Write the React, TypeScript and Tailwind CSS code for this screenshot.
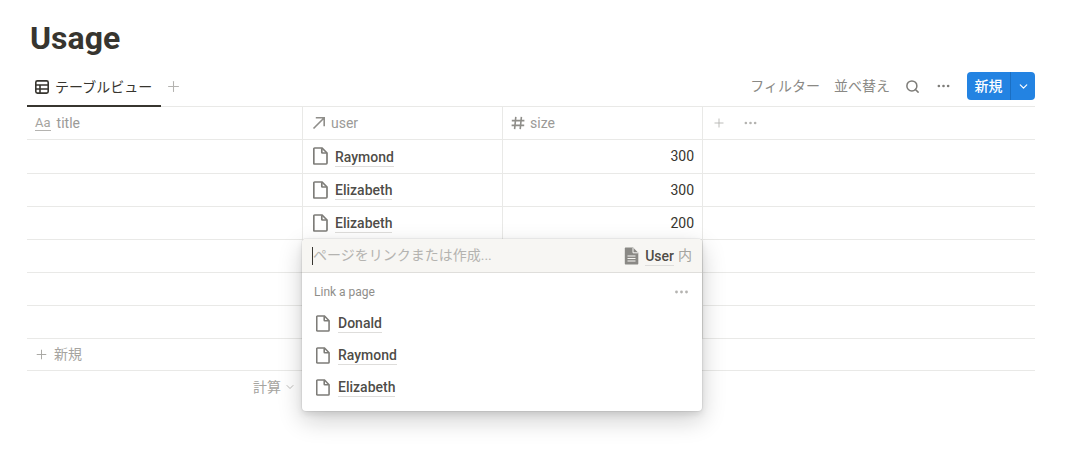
import { ChevronDown, Plus, Search } from 'lucide-react';

const FONT = 'font-["Roboto","Noto_Sans_CJK_JP",sans-serif]';

const rows = [
  { user: 'Raymond', size: '300', h: 'h-[34px]' },
  { user: 'Elizabeth', size: '300', h: 'h-[33px]' },
  { user: 'Elizabeth', size: '200', h: 'h-[33px]' },
  { user: '', size: '', h: 'h-[33px]' },
  { user: '', size: '', h: 'h-[33px]' },
  { user: '', size: '', h: 'h-[33px]' },
];

function PageIcon({ className = '' }: { className?: string }) {
  return (
    <svg viewBox="0 0 15 18" className={className} fill="none" stroke="#7d7c78" strokeWidth="1.7">
      <path d="M1.7 1h7.4l4.9 5v10.1c0 .5-.4.9-.9.9H1.7c-.5 0-.9-.4-.9-.9V1.9c0-.5.4-.9.9-.9z" />
      <path d="M8.8 1.2v4.2c0 .4.2.6.6.6h4.4" />
    </svg>
  );
}

function Dots({ className = '' }: { className?: string }) {
  return (
    <svg viewBox="0 0 14 4" className={className} fill="currentColor">
      <circle cx="2" cy="2" r="1.4" />
      <circle cx="7" cy="2" r="1.4" />
      <circle cx="12" cy="2" r="1.4" />
    </svg>
  );
}

function LinkName({ children }: { children: string }) {
  return (
    <span className="mt-[2px] text-[14px] leading-[17px] font-medium text-[#37352f]/90 border-b border-[#dedddb]">
      {children}
    </span>
  );
}

export default function App() {
  return (
    <div className={`w-[1071px] h-[464px] bg-white overflow-hidden relative pl-[27px] ${FONT}`}>
      <div className="w-[1008px]">
        <h1 className="h-[73px] pt-[17px] pl-[3px] text-[32px] leading-[42px] font-bold text-[#37352f]">Usage</h1>

        {/* tabs + actions */}
        <div className="h-[34px] flex items-start justify-between border-b border-[#e9e9e7]">
          <div className="flex items-start">
            <div className="h-[34px] w-[134px] flex items-center gap-[6px] pl-[8px] pb-[4px] border-b-2 border-[#37352f] text-[14px] text-[#37352f]">
              <svg viewBox="0 0 14 14" className="w-[14px] h-[14px]" fill="none" stroke="#37352f" strokeWidth="1.6">
                <rect x="0.8" y="0.9" width="12.4" height="12.2" rx="1.6" />
                <path d="M0.7 5h12.6M0.7 9h12.6M5 5v8" />
              </svg>
              <span className="whitespace-nowrap">テーブルビュー</span>
            </div>
            <Plus className="w-[17px] h-[17px] ml-[4px] mt-[5px] text-[#b4b3b0]" strokeWidth={1.5} />
          </div>
          <div className="flex items-center h-[28px] -mt-px text-[14px] text-[#8a8985]">
            <span>フィルター</span>
            <span className="ml-[14px]">並べ替え</span>
            <Search className="w-[15px] h-[15px] ml-[15px] text-[#7d7c78]" strokeWidth={2.4} />
            <Dots className="w-[13px] h-[4px] ml-[17px] text-[#7d7c78]" />
            <div className="ml-[17px] w-[68px] h-[28px] rounded-[4px] bg-[#2383e2] flex text-white">
              <span className="w-[44px] flex items-center justify-center text-[14px] font-medium border-r border-[#1b6fc2]">新規</span>
              <span className="flex-1 flex items-center justify-center">
                <ChevronDown className="w-[13px] h-[13px]" strokeWidth={2.2} />
              </span>
            </div>
          </div>
        </div>

        {/* header */}
        <div className="h-[33px] flex border-b border-[#e9e9e7] text-[14px] text-[#9b9a97]">
          <div className="w-[275px] flex items-center pl-[8px] gap-[6px]">
            <span className="text-[13px] leading-[14px] border-b border-[#b4b3b0] text-[#a5a4a0]">Aa</span>
            <span>title</span>
          </div>
          <div className="w-[200px] flex items-center pl-[9px] gap-[5px] border-l border-[#e9e9e7]">
            <svg viewBox="0 0 14 14" className="w-[14px] h-[14px]" fill="none" stroke="#8f8e8a" strokeWidth="1.6">
              <path d="M1.5 12.5L12 2M3.8 1.8h8.4v8.4" />
            </svg>
            <span>user</span>
          </div>
          <div className="w-[200px] flex items-center pl-[8px] gap-[5px] border-l border-[#e9e9e7]">
            <svg viewBox="0 0 14 14" className="w-[14px] h-[14px]" fill="none" stroke="#8f8e8a" strokeWidth="1.6">
              <path d="M4.8 .8L3.6 13.2M10.4 .8L9.2 13.2M.8 4.6h12.6M.6 9.4h12.6" />
            </svg>
            <span>size</span>
          </div>
          <div className="flex-1 flex items-center pl-[9px] border-l border-[#e9e9e7] text-[#b4b3b0]">
            <Plus className="w-[14px] h-[14px]" strokeWidth={1.5} />
            <Dots className="w-[13px] h-[4px] ml-[18px]" />
          </div>
        </div>

        {/* rows */}
        {rows.map((r, i) => (
          <div key={i} className={`${r.h} flex border-b border-[#e9e9e7] text-[14px] text-[#37352f]`}>
            <div className="w-[275px]" />
            <div className="w-[200px] flex items-center pl-[10px] gap-[7px] border-l border-[#e9e9e7]">
              {r.user && <PageIcon className="w-[15px] h-[18px] mb-[1px]" />}
              {r.user && <LinkName>{r.user}</LinkName>}
            </div>
            <div className="w-[200px] flex items-center justify-end pr-[8px] border-l border-[#e9e9e7]">{r.size}</div>
            <div className="flex-1 border-l border-[#e9e9e7]" />
          </div>
        ))}

        {/* new row */}
        <div className="h-[32px] flex items-center gap-[5px] pl-[7px] border-b border-[#e9e9e7] text-[14px] text-[#a5a4a0]">
          <Plus className="w-[15px] h-[15px]" strokeWidth={1.5} />
          <span>新規</span>
        </div>

        {/* calc */}
        <div className="h-[32px] w-[275px] flex items-center justify-end gap-[3px] pr-[6px] text-[14px] text-[#a5a4a0]">
          <span>計算</span>
          <ChevronDown className="w-[12px] h-[12px]" strokeWidth={1.5} />
        </div>
      </div>

      {/* link page popup */}
      <div className="absolute left-[302px] top-[239px] w-[400px] h-[172px] rounded-[4px] bg-white overflow-hidden shadow-[0_0_0_1px_rgba(15,15,15,0.05),0_3px_6px_rgba(15,15,15,0.1),0_9px_24px_rgba(15,15,15,0.2)]">
        <div className="h-[34px] flex items-center justify-between pl-[10px] pr-[10px] bg-[#f7f6f3] border-b border-[#dfdedb]">
          <div className="flex items-center">
            <span className="w-px h-[18px] bg-[#37352f]" />
            <span className="text-[14px] text-[#b4b3b0]">ページをリンクまたは作成...</span>
          </div>
          <div className="flex items-center text-[14px]">
            <svg viewBox="0 0 15 18" className="w-[15px] h-[18px] mr-[6px]">
              <path d="M1.8 .6h7.3l5.2 5.2v10.6c0 .6-.5 1-1 1H1.8c-.6 0-1-.4-1-1V1.6c0-.6.4-1 1-1z" fill="#8a8985" />
              <path d="M9 1v4.8h5" fill="none" stroke="#f7f6f3" strokeWidth="1" />
              <path d="M3.5 9h8M3.5 11.5h8M3.5 14h8" stroke="#f7f6f3" strokeWidth="1" />
            </svg>
            <LinkName>User</LinkName>
            <span className="ml-[4px] text-[#a5a4a0]">内</span>
          </div>
        </div>
        <div className="h-[34px] flex items-center justify-between pl-[12px] pr-[12px] pt-[4px] text-[12px] text-[#8f8e8a]">
          <span>Link a page</span>
          <Dots className="w-[17px] h-[4px] text-[#b4b3b0]" />
        </div>
        {['Donald', 'Raymond', 'Elizabeth'].map((name) => (
          <div key={name} className="h-[32px] flex items-center gap-[8px] pl-[14px]">
            <PageIcon className="w-[14px] h-[17px]" />
            <LinkName>{name}</LinkName>
          </div>
        ))}
      </div>
    </div>
  );
}
